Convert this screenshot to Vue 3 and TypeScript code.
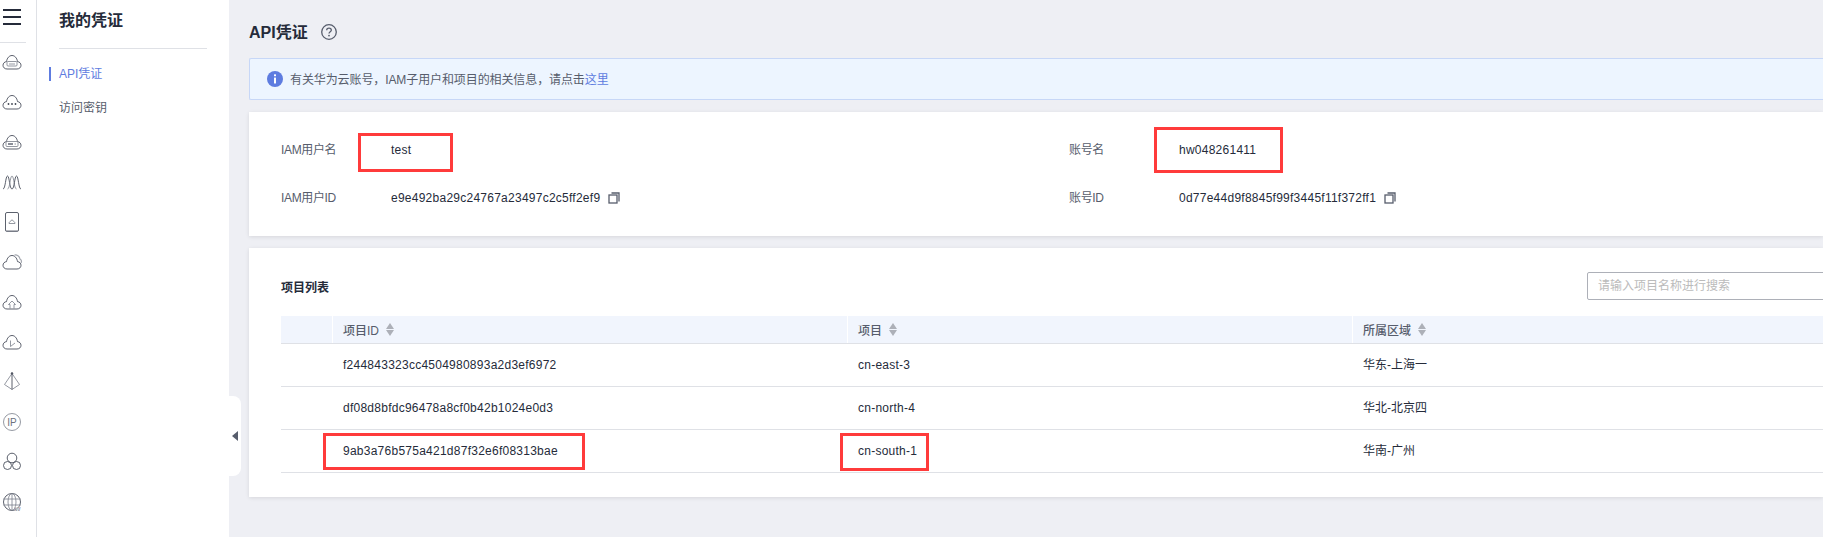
<script setup lang="ts">
interface ProjectRow {
  id: string
  name: string
  region: string
}

const cloud =
  'M7 19C4.6 19 3 17.3 3 15.3C3 13.3 4.5 11.8 6.5 11.6C7 8 9.3 5.5 12 5.5C14.7 5.5 17 8 17.5 11.6C19.5 11.8 21 13.3 21 15.3C21 17.3 19.4 19 17 19Z'

const projects: ProjectRow[] = [
  { id: 'f244843323cc4504980893a2d3ef6972', name: 'cn-east-3', region: '华东-上海一' },
  { id: 'df08d8bfdc96478a8cf0b42b1024e0d3', name: 'cn-north-4', region: '华北-北京四' },
  { id: '9ab3a76b575a421d87f32e6f08313bae', name: 'cn-south-1', region: '华南-广州' },
]

const columns: string[] = ['项目ID', '项目', '所属区域']
</script>

<template>
  <div class="shell">
    <nav class="rail">
      <div class="rail-top">
        <span class="burger"></span>
        <span class="burger"></span>
        <span class="burger"></span>
      </div>
      <div class="rail-icon">
        <svg viewBox="0 0 24 24"><path :d="cloud" /><rect x="7" y="11.5" width="10" height="4.5" rx="1" class="thin" /><path d="M9 14h6" class="thin" /></svg>
      </div>
      <div class="rail-icon">
        <svg viewBox="0 0 24 24"><path :d="cloud" /><circle cx="8.500" cy="14" r=".9" class="dot" /><circle cx="12" cy="14" r=".9" class="dot" /><circle cx="15.500" cy="14" r=".9" class="dot" /></svg>
      </div>
      <div class="rail-icon">
        <svg viewBox="0 0 24 24"><path :d="cloud" /><rect x="6" y="11.500" width="12" height="5" rx="1" class="thin" /><path d="M8 14h5" class="mid" /><path d="M14.500 14h1.500" class="thin" /></svg>
      </div>
      <div class="rail-icon">
        <svg viewBox="0 0 24 24"><path d="M3 19C5.500 19 5.500 6 7.500 6C9.500 6 9.500 19 12 19" /><path d="M7.500 19C10 19 10 6 12 6C14 6 14 19 16.500 19" class="thin" /><path d="M12 19C14.500 19 14.500 6 16.500 6C18.500 6 18.500 19 21 19" /></svg>
      </div>
      <div class="rail-icon">
        <svg viewBox="0 0 24 24"><rect x="5.500" y="2.500" width="13" height="19" rx="1.500" /><path d="M6 20.800h12" class="gray" /><path d="M9 13.500C9 12 10 11.500 10.500 11.400C10.700 10.500 11.300 10 12 10C12.700 10 13.300 10.500 13.500 11.400C14 11.500 15 12 15 13.500Z" class="thin" /></svg>
      </div>
      <div class="rail-icon">
        <svg viewBox="0 0 24 24"><path d="M14.500 5C17 4.500 19.500 6.300 20 9C21.500 10 21.800 11.500 21 13" class="gray" /><path :d="cloud" /></svg>
      </div>
      <div class="rail-icon">
        <svg viewBox="0 0 24 24"><path :d="cloud" /><path d="M8.500 14.500L12 11L15.500 14.500H14V18.500M8.500 14.500H10V18.500" class="thin" /></svg>
      </div>
      <div class="rail-icon">
        <svg viewBox="0 0 24 24"><path :d="cloud" /><path d="M10.500 10.500V16.500L15 13" class="thin" /></svg>
      </div>
      <div class="rail-icon">
        <svg viewBox="0 0 24 24"><circle cx="12" cy="3.500" r="1.200" class="dot" /><path d="M12 3.500L4.500 14.500L12 19.500L19.500 14.500Z" class="thin" /><path d="M12 3.500V19.500" /></svg>
      </div>
      <div class="rail-icon">
        <svg viewBox="0 0 24 24"><circle cx="12" cy="12" r="8.500" class="thin" /><text x="12" y="15.500" class="ip">IP</text></svg>
      </div>
      <div class="rail-icon">
        <svg viewBox="0 0 24 24"><circle cx="12" cy="8" r="4.800" /><circle cx="7.500" cy="15.500" r="4" /><circle cx="16.500" cy="15.500" r="4" /></svg>
      </div>
      <div class="rail-icon">
        <svg viewBox="0 0 24 24"><circle cx="12" cy="12" r="8.500" /><ellipse cx="12" cy="12" rx="4" ry="8.500" class="thin" /><path d="M3.500 9h17M3.500 15h17M12 3.500v17" class="thin" /><text x="17.500" y="20.500" class="w">W</text></svg>
      </div>
    </nav>

    <aside class="side">
      <h2 class="side-title">我的凭证</h2>
      <ul class="side-nav">
        <li class="side-item active">API凭证</li>
        <li class="side-item">访问密钥</li>
      </ul>
    </aside>

    <main class="main">
      <header class="page-head">
        <h1 class="page-title">API凭证</h1>
        <svg class="help" viewBox="0 0 16 16">
          <circle cx="8" cy="8" r="7.300" />
          <path d="M5.700 6.300C5.700 5 6.700 4.200 8 4.200C9.300 4.200 10.300 5 10.300 6.200C10.300 7.800 8 7.800 8 9.600" />
          <circle cx="8" cy="11.600" r=".9" class="help-dot" />
        </svg>
      </header>

      <div class="alert">
        <svg class="info" viewBox="0 0 16 16">
          <circle cx="8" cy="8" r="8" />
          <rect x="7" y="3.300" width="2" height="2" rx=".5" />
          <rect x="7" y="6.600" width="2" height="6" rx=".5" />
        </svg>
        <span class="alert-text">有关华为云账号，IAM子用户和项目的相关信息，请点击<a class="link">这里</a></span>
      </div>

      <section class="card info-card">
        <div class="info-grid">
          <span class="label">IAM用户名</span>
          <span class="value">test</span>
          <span class="label">账号名</span>
          <span class="value">hw048261411</span>
          <span class="label">IAM用户ID</span>
          <span class="value">
            e9e492ba29c24767a23497c2c5ff2ef9
            <svg class="copy" viewBox="0 0 12 12"><path d="M3.500 1H11V9.500" /><rect x="1" y="3" width="8" height="8" /></svg>
          </span>
          <span class="label">账号ID</span>
          <span class="value">
            0d77e44d9f8845f99f3445f11f372ff1
            <svg class="copy" viewBox="0 0 12 12"><path d="M3.500 1H11V9.500" /><rect x="1" y="3" width="8" height="8" /></svg>
          </span>
        </div>
      </section>

      <section class="card list-card">
        <div class="list-head">
          <h3 class="list-title">项目列表</h3>
          <input class="search" type="text" placeholder="请输入项目名称进行搜索" />
        </div>
        <div class="table">
          <div class="tr th-row">
            <div class="cell"></div>
            <div v-for="col in columns" :key="col" class="cell th">
              <span>{{ col }}</span>
              <span class="sort"><i class="up"></i><i class="down"></i></span>
            </div>
          </div>
          <div v-for="row in projects" :key="row.id" class="tr body-row">
            <div class="cell"></div>
            <div class="cell latin">{{ row.id }}</div>
            <div class="cell latin">{{ row.name }}</div>
            <div class="cell region">{{ row.region }}</div>
          </div>
        </div>
      </section>
    </main>

    <div class="collapse"><span class="tri"></span></div>

    <span class="mark mark-user"></span>
    <span class="mark mark-account"></span>
    <span class="mark mark-id"></span>
    <span class="mark mark-region"></span>
  </div>
</template>

<style>
html,
body {
  margin: 0;
  background: #eeeff4;
}
</style>

<style scoped>
.shell {
  position: relative;
  display: flex;
  width: 1823px;
  height: 537px;
  overflow: hidden;
  background: #eeeff4;
  color: #252b3a;
  font-family: "Liberation Sans", "Noto Sans CJK SC", sans-serif;
  font-size: 12px;
}

/* rail */
.rail {
  flex: none;
  box-sizing: border-box;
  width: 37px;
  background: #fff;
  border-right: 1px solid #dfe1e6;
}
.rail-top {
  box-sizing: border-box;
  display: flex;
  flex-direction: column;
  gap: 5px;
  width: 26px;
  height: 43px;
  padding: 9px 0 0 3px;
  border-bottom: 1px solid #dfe1e6;
}
.burger {
  width: 18px;
  height: 2px;
  background: #252b3a;
}
.rail-icon {
  display: flex;
  align-items: center;
  justify-content: center;
  width: 24px;
  height: 40px;
}
.rail-icon svg {
  width: 24px;
  height: 24px;
  margin-top: -2px;
  fill: none;
  stroke: #4a4f5c;
  stroke-width: 0.9;
}
.rail-icon .thin {
  stroke: #7a7f8a;
  stroke-width: 0.8;
}
.rail-icon .mid {
  stroke: #6c717d;
  stroke-width: 1.6;
}
.rail-icon .gray {
  stroke: #a5a8b0;
  stroke-width: 1.2;
}
.rail-icon .dot {
  fill: #3f4552;
  stroke: none;
}
.rail-icon .ip {
  fill: #6c717d;
  stroke: none;
  font-size: 10px;
  text-anchor: middle;
}
.rail-icon .w {
  fill: #252b3a;
  stroke: #fff;
  stroke-width: 0.3;
  font-size: 6px;
  font-weight: 700;
  text-anchor: middle;
}

/* side menu */
.side {
  flex: none;
  box-sizing: border-box;
  width: 192px;
  padding-left: 22px;
  background: #fff;
}
.side-title {
  box-sizing: border-box;
  width: 148px;
  height: 49px;
  margin: 0;
  padding-top: 9px;
  border-bottom: 1px solid #dfe1e6;
  font-size: 16px;
  font-weight: 700;
  line-height: 24px;
}
.side-nav {
  margin: 8px 0 0;
  padding: 0;
  list-style: none;
}
.side-item {
  position: relative;
  height: 34px;
  color: #575d6c;
  line-height: 34px;
}
.side-item.active {
  color: #5e7ce0;
}
.side-item.active::before {
  content: "";
  position: absolute;
  top: 10px;
  left: -10px;
  width: 2px;
  height: 14px;
  background: #5e7ce0;
}

/* main */
.main {
  flex: 1;
  min-width: 0;
  padding-left: 20px;
  overflow: hidden;
}
.page-head {
  display: flex;
  align-items: center;
  gap: 13px;
  height: 24px;
  margin: 20px 0 14px;
}
.page-title {
  margin: 0;
  padding-bottom: 2px;
  font-size: 16px;
  font-weight: 700;
}
.help {
  width: 16px;
  height: 16px;
  fill: none;
  stroke: #575d6c;
  stroke-width: 1.300;
}
.help .help-dot {
  fill: #575d6c;
  stroke: none;
}
.alert {
  box-sizing: border-box;
  display: flex;
  align-items: center;
  gap: 7px;
  height: 42px;
  padding-left: 17px;
  border: 1px solid #c7d7f7;
  border-right: 0;
  border-radius: 2px 0 0 2px;
  background: #edf5ff;
  color: #575d6c;
}
.alert-text {
  padding-bottom: 2px;
  letter-spacing: -0.1px;
}
.info {
  width: 16px;
  height: 16px;
  fill: #5e7ce0;
}
.info rect {
  fill: #fff;
}
.link {
  color: #5e7ce0;
}
.card {
  margin-top: 12px;
  background: #fff;
  box-shadow: 0 1px 4px rgba(0, 0, 0, 0.1);
}
.info-card {
  box-sizing: border-box;
  height: 124px;
  padding: 26px 0 0 32px;
}
.info-grid {
  display: grid;
  grid-template-columns: 110px 678px 110px 1fr;
  grid-auto-rows: 24px;
  row-gap: 24px;
  align-items: center;
}
.label {
  padding-bottom: 3px;
  color: #575d6c;
  letter-spacing: -0.35px;
}
.value {
  display: flex;
  align-items: center;
  gap: 8px;
  letter-spacing: 0.25px;
}
.copy {
  width: 12px;
  height: 12px;
  fill: none;
  stroke: #575d6c;
  stroke-width: 1.300;
}

/* project list */
.list-card {
  box-sizing: border-box;
  height: 249px;
  padding: 24px 0 0 32px;
}
.list-head,
.table {
  width: 1600px;
}
.list-head {
  display: flex;
  align-items: center;
  justify-content: space-between;
  height: 28px;
  margin-bottom: 16px;
}
.list-title {
  margin: 0;
  font-size: 12px;
  font-weight: 700;
}
.search {
  box-sizing: border-box;
  width: 294px;
  height: 28px;
  padding: 0 10px;
  border: 1px solid #adb0b8;
  border-radius: 2px;
  outline: 0;
  font: inherit;
}
.search::placeholder {
  color: #bbb;
}
.tr {
  display: grid;
  grid-template-columns: 51px 515px 505px 1fr;
  box-sizing: border-box;
  border-bottom: 1px solid #dfe1e6;
}
.th-row {
  height: 28px;
  background: #f1f5fd;
  color: #575d6c;
}
.body-row {
  height: 43px;
}
.cell {
  display: flex;
  align-items: center;
  padding-left: 11px;
}
.latin {
  letter-spacing: 0.25px;
}
.region {
  padding-bottom: 3px;
}
.th {
  gap: 7px;
  padding-left: 10px;
  border-left: 1px solid #fff;
  font-weight: 500;
}
.sort {
  display: flex;
  flex-direction: column;
  gap: 1px;
}
.sort i {
  display: block;
  width: 0;
  height: 0;
  border-right: 4px solid transparent;
  border-left: 4px solid transparent;
}
.sort .up {
  border-bottom: 6px solid #adb0b8;
}
.sort .down {
  border-top: 6px solid #adb0b8;
}

/* overlays */
.collapse {
  position: absolute;
  top: 396px;
  left: 229px;
  display: flex;
  align-items: center;
  width: 12px;
  height: 80px;
  border-radius: 0 8px 8px 0;
  background: #fff;
}
.tri {
  width: 0;
  height: 0;
  margin-left: 3px;
  border-top: 5px solid transparent;
  border-right: 6px solid #575d6c;
  border-bottom: 5px solid transparent;
}
.mark {
  position: absolute;
  box-sizing: border-box;
  border: 3px solid #ff3b3b;
  pointer-events: none;
}
.mark-user {
  top: 133px;
  left: 358px;
  width: 95px;
  height: 39px;
}
.mark-account {
  top: 127px;
  left: 1154px;
  width: 129px;
  height: 46px;
}
.mark-id {
  top: 433px;
  left: 323px;
  width: 262px;
  height: 37px;
}
.mark-region {
  top: 433px;
  left: 840px;
  width: 89px;
  height: 38px;
}
</style>
